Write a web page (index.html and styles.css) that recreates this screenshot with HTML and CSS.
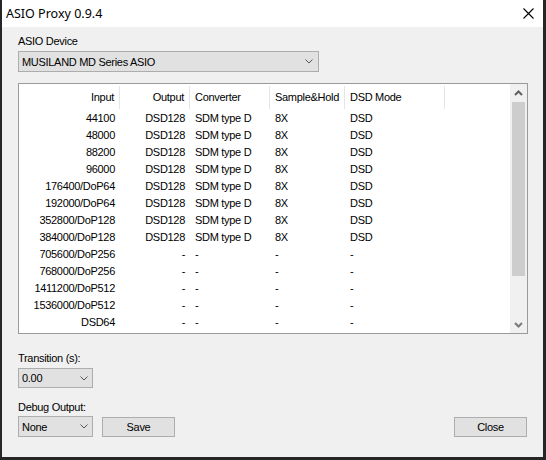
FILE: index.html
```html
<!DOCTYPE html>
<html>
<head>
<meta charset="utf-8">
<link rel="stylesheet" href="styles.css">
</head>
<body>
<div class="window">
  <div class="titlebar">
    <span class="title">ASIO Proxy 0.9.4</span>
    <svg class="close-x" width="11" height="11" viewBox="0 0 11 11"><path d="M0.5 0.5 L10.5 10.5 M10.5 0.5 L0.5 10.5" stroke="#000" stroke-width="1.1" fill="none"/></svg>
  </div>
  <div class="content">
    <div class="label first">ASIO Device</div>
    <div class="combo combo-wide">
      <span>MUSILAND MD Series ASIO</span>
      <svg class="chev" width="8" height="5" viewBox="0 0 8 5"><polyline points="0.5,0.5 4,4 7.5,0.5" stroke="#555" stroke-width="1" fill="none"/></svg>
    </div>
    <div class="listview">
      <div class="table">
        <div class="row header">
          <div class="cell r">Input</div>
          <div class="cell r">Output</div>
          <div class="cell">Converter</div>
          <div class="cell">Sample&amp;Hold</div>
          <div class="cell">DSD Mode</div>
          <div class="cell last"></div>
        </div>
        <div class="row"><div class="cell r">44100</div><div class="cell r">DSD128</div><div class="cell">SDM type D</div><div class="cell">8X</div><div class="cell">DSD</div><div class="cell last"></div></div>
        <div class="row"><div class="cell r">48000</div><div class="cell r">DSD128</div><div class="cell">SDM type D</div><div class="cell">8X</div><div class="cell">DSD</div><div class="cell last"></div></div>
        <div class="row"><div class="cell r">88200</div><div class="cell r">DSD128</div><div class="cell">SDM type D</div><div class="cell">8X</div><div class="cell">DSD</div><div class="cell last"></div></div>
        <div class="row"><div class="cell r">96000</div><div class="cell r">DSD128</div><div class="cell">SDM type D</div><div class="cell">8X</div><div class="cell">DSD</div><div class="cell last"></div></div>
        <div class="row"><div class="cell r">176400/DoP64</div><div class="cell r">DSD128</div><div class="cell">SDM type D</div><div class="cell">8X</div><div class="cell">DSD</div><div class="cell last"></div></div>
        <div class="row"><div class="cell r">192000/DoP64</div><div class="cell r">DSD128</div><div class="cell">SDM type D</div><div class="cell">8X</div><div class="cell">DSD</div><div class="cell last"></div></div>
        <div class="row"><div class="cell r">352800/DoP128</div><div class="cell r">DSD128</div><div class="cell">SDM type D</div><div class="cell">8X</div><div class="cell">DSD</div><div class="cell last"></div></div>
        <div class="row"><div class="cell r">384000/DoP128</div><div class="cell r">DSD128</div><div class="cell">SDM type D</div><div class="cell">8X</div><div class="cell">DSD</div><div class="cell last"></div></div>
        <div class="row"><div class="cell r">705600/DoP256</div><div class="cell r">-</div><div class="cell">-</div><div class="cell">-</div><div class="cell">-</div><div class="cell last"></div></div>
        <div class="row"><div class="cell r">768000/DoP256</div><div class="cell r">-</div><div class="cell">-</div><div class="cell">-</div><div class="cell">-</div><div class="cell last"></div></div>
        <div class="row"><div class="cell r">1411200/DoP512</div><div class="cell r">-</div><div class="cell">-</div><div class="cell">-</div><div class="cell">-</div><div class="cell last"></div></div>
        <div class="row"><div class="cell r">1536000/DoP512</div><div class="cell r">-</div><div class="cell">-</div><div class="cell">-</div><div class="cell">-</div><div class="cell last"></div></div>
        <div class="row"><div class="cell r">DSD64</div><div class="cell r">-</div><div class="cell">-</div><div class="cell">-</div><div class="cell">-</div><div class="cell last"></div></div>
      </div>
      <div class="scrollbar">
        <div class="sb-btn">
          <svg width="9" height="6" viewBox="0 0 9 6"><polyline points="1,5 4.5,1.5 8,5" stroke="#606060" stroke-width="2" fill="none"/></svg>
        </div>
        <div class="sb-track"><div class="sb-thumb"></div></div>
        <div class="sb-btn">
          <svg width="9" height="6" viewBox="0 0 9 6"><polyline points="1,1 4.5,4.5 8,1" stroke="#7a7a7a" stroke-width="2" fill="none"/></svg>
        </div>
      </div>
    </div>
    <div class="label trans">Transition (s):</div>
    <div class="combo combo-small">
      <span>0.00</span>
      <svg class="chev" width="8" height="5" viewBox="0 0 8 5"><polyline points="0.5,0.5 4,4 7.5,0.5" stroke="#555" stroke-width="1" fill="none"/></svg>
    </div>
    <div class="label debug">Debug Output:</div>
    <div class="bottom-row">
      <div class="combo combo-small tall">
        <span>None</span>
        <svg class="chev" width="8" height="5" viewBox="0 0 8 5"><polyline points="0.5,0.5 4,4 7.5,0.5" stroke="#555" stroke-width="1" fill="none"/></svg>
      </div>
      <div class="button save">Save</div>
      <div class="button close">Close</div>
    </div>
  </div>
</div>
</body>
</html>
```
FILE: styles.css
```css
html, body {
  margin: 0;
  padding: 0;
}
body {
  background: #262626;
  width: 546px;
  height: 460px;
  overflow: hidden;
  font-family: "Liberation Sans", Arial, sans-serif;
  font-size: 11px;
  letter-spacing: -0.3px;
  color: #000;
}
.window {
  margin-left: 2px;
  width: 541px;
  height: 457px;
  background: #f0f0f0;
  display: flex;
  flex-direction: column;
}
.titlebar {
  height: 27px;
  background: #fff;
  display: flex;
  align-items: center;
  justify-content: space-between;
  padding: 0 9px 0 4px;
  flex-shrink: 0;
}
.title {
  font-family: "Noto Sans", sans-serif;
  font-size: 12.5px;
  letter-spacing: 0;
  line-height: 27px;
}
.close-x {
  display: block;
  margin-top: -1px;
}
.content {
  padding: 0 16px;
  display: flex;
  flex-direction: column;
  align-items: flex-start;
}
.label {
  line-height: 13px;
  height: 13px;
}
.label.first { margin-top: 8px; }
.label.trans { margin-top: 18px; }
.label.debug { margin-top: 13px; }
.combo {
  box-sizing: border-box;
  background: #e1e1e1;
  border: 1px solid #adadad;
  display: flex;
  align-items: center;
  justify-content: space-between;
  margin-top: 3px;
}
.combo-wide {
  width: 301px;
  height: 21px;
  padding: 0 5px 0 3px;
}
.combo-small {
  width: 75px;
  height: 20px;
  padding: 0 4px 0 3px;
}
.combo-small.tall {
  height: 21px;
  margin-top: 0;
}
.chev { display: block; }
.listview {
  box-sizing: border-box;
  margin-top: 11px;
  width: 510px;
  height: 251px;
  border: 1px solid #9a9a9a;
  background: #fff;
  display: flex;
  overflow: hidden;
}
.table {
  width: 491px;
  display: flex;
  flex-direction: column;
}
.row {
  display: grid;
  grid-template-columns: 101px 70px 80px 75px 100px 65px;
  height: 17px;
  line-height: 17px;
}
.row.header {
  height: 26px;
  padding-top: 2px;
  box-sizing: border-box;
  align-items: start;
}
.cell {
  box-sizing: border-box;
  padding-left: 5px;
  white-space: nowrap;
  overflow: hidden;
}
.cell.r {
  text-align: right;
  padding-left: 0;
  padding-right: 5px;
}
.header .cell {
  height: 23px;
  line-height: 23px;
  border-right: 1px solid #e5e5e5;
}
.header .cell.last {
  border-right: none;
}
.header .cell.r {
  padding-right: 5px;
}
.scrollbar {
  width: 17px;
  background: #f0f0f0;
  display: flex;
  flex-direction: column;
}
.sb-btn {
  height: 17px;
  display: flex;
  align-items: center;
  justify-content: center;
  flex-shrink: 0;
}
.sb-track {
  flex: 1;
  padding-top: 1px;
}
.sb-thumb {
  margin: 0 2px 0 2px;
  height: 174px;
  background: #cdcdcd;
}
.bottom-row {
  display: flex;
  align-items: flex-start;
  width: 509px;
  margin-top: 2px;
}
.button {
  box-sizing: border-box;
  width: 73px;
  height: 20px;
  margin-top: 1px;
  background: #e1e1e1;
  border: 1px solid #adadad;
  text-align: center;
  line-height: 18px;
}
.button.save {
  margin-left: 9px;
}
.button.close {
  margin-left: auto;
}
```
